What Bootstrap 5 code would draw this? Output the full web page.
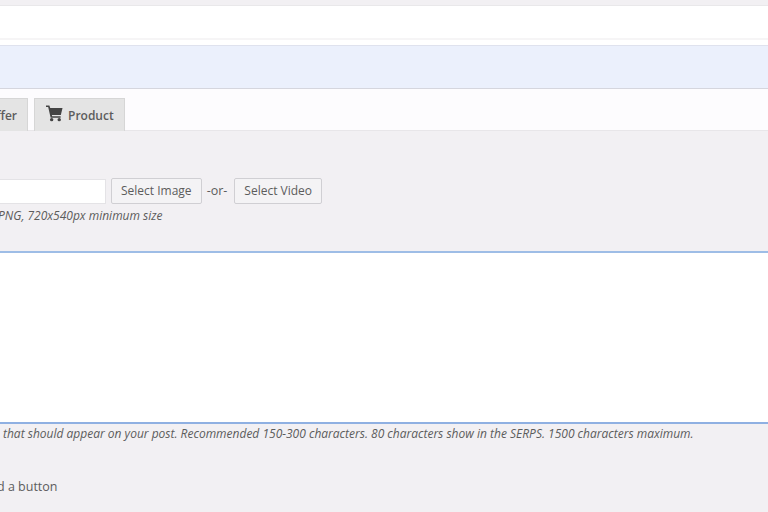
<!DOCTYPE html>
<html lang="en">
<head>
<meta charset="utf-8">
<title>Post editor</title>
<link rel="stylesheet" href="https://cdn.jsdelivr.net/npm/bootstrap@5.3.0/dist/css/bootstrap.min.css">
<style>
html,body{height:512px;overflow:hidden}
body{background:#f2f0f3;font-family:"Open Sans","Noto Sans",sans-serif;color:#5c5c5c;font-size:12px}
.top-gap{height:5px}
.title-field{height:35px;background:#fff;border-top:1px solid #e9e8ea;border-bottom:2px solid #f6f5f6}
.after-title{height:5px;background:#fff}
.notice-bar{height:44px;background:#ebf0fc;border-top:1px solid #dfe2ee;border-bottom:1px solid #d5d6de}
.tab-strip{height:42px;background:#fdfcfe;border-bottom:1px solid #e8e6e9;margin-left:-30px;padding-top:9px;gap:6px}
.tab-item{height:33px;background:#e4e4e4;border:1px solid #d6d6d6;border-bottom:0;font-weight:600;color:#5c5c5c;font-size:12px;gap:5px}
.tab-first{width:58px;padding:0 0 0 7px}
.tab-second{width:91px;padding:0 0 0 11px}
.tab-label{padding-top:1px}
.tab-first .tab-label{margin-right:10px}
.cart-icon{margin-bottom:3px}
.media-panel{height:120px;padding-top:47px}
.media-row{margin-left:-60px;gap:5px}
.url-input{width:166px;height:25px;background:#fff;border:1px solid #e4e3e6;border-radius:0;padding:0}
.pick-btn{height:26px;background:#f4f3f5;border:1px solid #d0cfd3;border-radius:2px;color:#5c5c5c;font-size:12px;padding:0 9px;line-height:1}
.or-text{font-size:12.500px;margin:1px 2px 0 0}
.hint-text{font-style:italic;font-size:12px;line-height:16px;margin-top:4px;white-space:nowrap}
.hint-media{margin-left:-2px}
.body-editor{height:173px;background:#fff;border-top:2px solid #9ebde6;border-bottom:2px solid #8fb0e2}
.hint-body{margin:2px 0 0 3px;font-size:12px}
.add-button-label{margin:37px 0 0 -3px;font-size:12.500px;line-height:16px;white-space:nowrap}
</style>
</head>
<body>
<div class="top-gap"></div>
<div class="title-field"></div>
<div class="after-title"></div>
<div class="notice-bar"></div>
<div class="tab-strip d-flex align-items-start">
  <div class="tab-item tab-first d-flex align-items-center justify-content-end"><span class="tab-label">Offer</span></div>
  <div class="tab-item tab-second d-flex align-items-center">
    <svg class="cart-icon" width="17" height="17" viewBox="0 0 18 17" aria-hidden="true"><path fill="#444" d="M0 0h3.600l.9 2.600H17.500l-1.800 7.400H6.200l.3 1.400H15.500v1.600H4.900L2.300 1.700H0z"/><circle cx="6" cy="15" r="1.800" fill="#444"/><circle cx="14" cy="15" r="1.800" fill="#444"/></svg>
    <span class="tab-label">Product</span>
  </div>
</div>
<div class="media-panel">
  <div class="media-row d-flex align-items-center">
    <div class="url-input"></div>
    <button type="button" class="btn pick-btn">Select Image</button>
    <span class="or-text">-or-</span>
    <button type="button" class="btn pick-btn">Select Video</button>
  </div>
  <div class="hint-text hint-media">PNG, 720x540px minimum size</div>
</div>
<div class="body-editor"></div>
<div class="hint-text hint-body">that should appear on your post. Recommended 150-300 characters. 80 characters show in the SERPS. 1500 characters maximum.</div>
<div class="add-button-label">d a button</div>
<script src="https://cdn.jsdelivr.net/npm/bootstrap@5.3.0/dist/js/bootstrap.bundle.min.js"></script>
</body>
</html>
